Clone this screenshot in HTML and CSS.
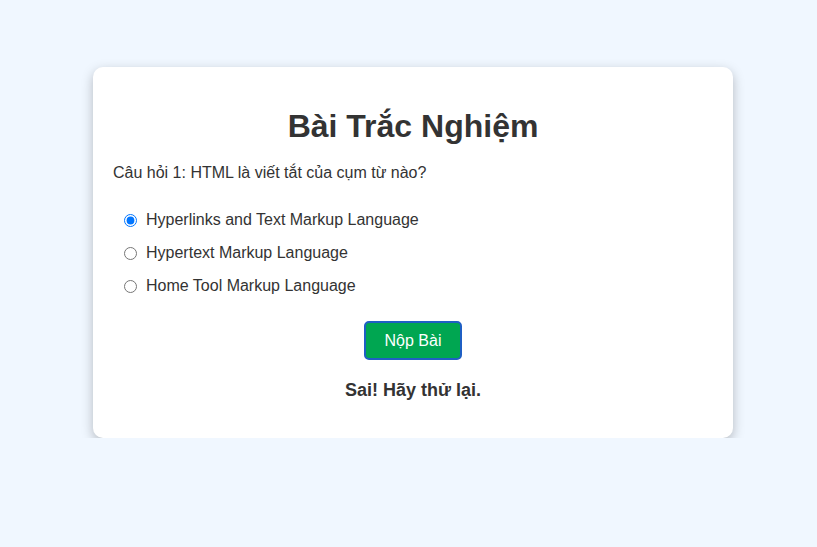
FILE: index.html
```html
<!DOCTYPE html>
<html lang="vi">
<head>
<meta charset="utf-8">
<title>Bài Trắc Nghiệm</title>
<link rel="stylesheet" href="styles.css">
</head>
<body>
<div class="quiz">
  <h1 class="title">Bài Trắc Nghiệm</h1>
  <p class="question">Câu hỏi 1: HTML là viết tắt của cụm từ nào?</p>
  <div class="options">
    <label class="option"><input type="radio" name="q1" checked><span>Hyperlinks and Text Markup Language</span></label>
    <label class="option"><input type="radio" name="q1"><span>Hypertext Markup Language</span></label>
    <label class="option"><input type="radio" name="q1"><span>Home Tool Markup Language</span></label>
  </div>
  <div class="actions">
    <button class="submit" type="button">Nộp Bài</button>
  </div>
  <p class="result">Sai! Hãy thử lại.</p>
</div>
</body>
</html>
```
FILE: styles.css
```css
html, body {
  margin: 0;
  background: #f0f7ff;
}
body {
  font-family: "Liberation Sans", Arial, sans-serif;
  color: #333;
  padding: 67px 0 0 9px;
}
.quiz {
  width: 600px;
  margin: 0 auto;
  background: #fff;
  padding: 20px;
  border-radius: 10px;
  box-shadow: 0 4px 12px rgba(0, 0, 0, 0.25);
}
.title {
  text-align: center;
  font-size: 32px;
  margin: 21px 0 19px;
  color: #333;
}
.question {
  font-size: 16px;
  margin: 0 0 29px;
}
.options {
  display: flex;
  flex-direction: column;
  gap: 15px;
  padding-left: 10px;
}
.option {
  display: flex;
  align-items: center;
  font-size: 16px;
  line-height: 18px;
}
.option input {
  margin: 0 9px 0 1px;
  width: 13px;
  height: 13px;
}
.actions {
  display: flex;
  justify-content: center;
  margin-top: 26px;
}
.submit {
  font-family: "Liberation Sans", Arial, sans-serif;
  font-size: 16px;
  color: #fff;
  background: #00a651;
  border: 2px solid #1f5fc4;
  border-radius: 5px;
  padding: 9px 19px;
  line-height: 17px;
}
.result {
  text-align: center;
  font-weight: bold;
  font-size: 18px;
  margin: 20px 0 17px;
}
```
